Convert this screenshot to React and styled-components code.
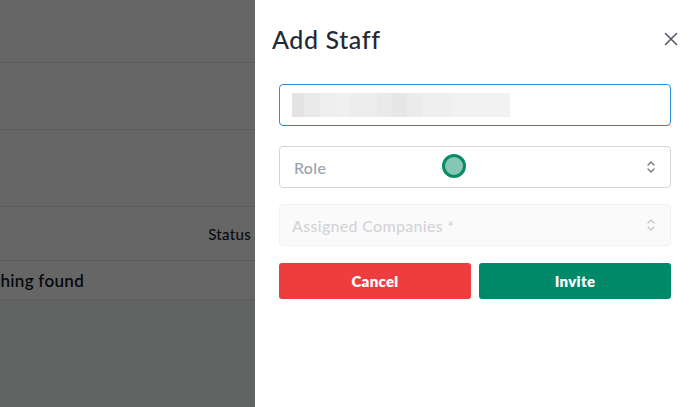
import React from "react"
import styled, { createGlobalStyle } from "styled-components"

const GlobalStyle = createGlobalStyle`
  html, body {
    margin: 0;
    padding: 0;
    width: 695px;
    height: 407px;
    overflow: hidden;
    font-family: "Lato", "Open Sans", sans-serif;
  }
`

const Page = styled.div`
  position: relative;
  width: 695px;
  height: 407px;
  background: #f3f4f6;
  overflow: hidden;
`

const Row = styled.div`
  height: ${props => props.h}px;
  box-sizing: border-box;
  background: #ffffff;
  border-bottom: 1px solid #e5e7eb;
  display: flex;
  align-items: center;
  color: #111827;
`

const HeadCell = styled.div`
  width: 251px;
  text-align: right;
  font-size: 15px;
  font-weight: 500;
  letter-spacing: 0.3px;
`

const EmptyText = styled.div`
  margin-left: -29px;
  font-size: 17px;
  font-weight: 600;
  letter-spacing: 0.3px;
`

const Overlay = styled.div`
  position: absolute;
  inset: 0;
  background: rgba(0, 0, 0, 0.6);
`

const Drawer = styled.aside`
  position: absolute;
  top: 0;
  right: 0;
  bottom: 0;
  width: 440px;
  background: #ffffff;
  box-sizing: border-box;
  padding: 0 24px;
`

const Header = styled.div`
  display: flex;
  align-items: center;
  justify-content: space-between;
  height: 78px;
  margin-left: -7px;
`

const Title = styled.h2`
  margin: 0;
  font-size: 25px;
  font-weight: 500;
  color: #1f2937;
  letter-spacing: 0.6px;
`

const Close = styled.button`
  border: none;
  background: none;
  padding: 0;
  margin-right: -7px;
  display: flex;
  color: #4b5563;
`

const Field = styled.div`
  position: relative;
  height: 42px;
  box-sizing: border-box;
  margin-top: ${props => props.mt}px;
  border: 1px solid ${props => props.borderColor};
  border-radius: 4px;
  background: ${props => props.bg || "#ffffff"};
  display: flex;
  align-items: center;
  justify-content: space-between;
  padding: 0 14px 0 ${props => props.pl || 14}px;
`

const Blurred = styled.div`
  width: 218px;
  height: 24px;
  background: linear-gradient(
    90deg,
    #e3e3e3 0 12px,
    #e9e9e9 12px 28px,
    #eeeeee 28px 43px,
    #f0f0f0 43px 58px,
    #ededed 58px 85px,
    #eaeaea 85px 100px,
    #e6e6e6 100px 115px,
    #ebebeb 115px 130px,
    #efefef 130px 160px,
    #f2f2f2 160px 218px
  );
`

const Placeholder = styled.span`
  font-size: 16px;
  font-weight: 500;
  letter-spacing: 0.3px;
  color: ${props => props.color};
`

const Cursor = styled.div`
  position: absolute;
  left: 162px;
  top: 7px;
  width: 18px;
  height: 18px;
  border-radius: 50%;
  background: #86c7b3;
  border: 3px solid #0b8a66;
`

const Buttons = styled.div`
  display: grid;
  grid-template-columns: 1fr 1fr;
  gap: 8px;
  margin-top: 17px;
`

const Button = styled.button`
  height: 36px;
  border: none;
  border-radius: 3px;
  background: ${props => props.bg};
  color: #ffffff;
  font-family: inherit;
  font-size: 15px;
  font-weight: 800;
  letter-spacing: 0.3px;
`

const Chevrons = ({ color }) => (
  <svg width="10" height="14" viewBox="0 0 10 14" fill="none" stroke={color} strokeWidth="1.2" strokeLinecap="round" strokeLinejoin="round">
    <path d="M2 5 L5 2 L8 5" />
    <path d="M2 9 L5 12 L8 9" />
  </svg>
)

export default function App() {
  return (
    <>
      <GlobalStyle />
      <Page>
        <Row h={63} />
        <Row h={67} />
        <Row h={77} />
        <Row h={54}><HeadCell>Status</HeadCell></Row>
        <Row h={39}><EmptyText>Nothing found</EmptyText></Row>
        <Overlay />
        <Drawer>
          <Header>
            <Title>Add Staff</Title>
            <Close>
              <svg width="14" height="14" viewBox="0 0 14 14" stroke="currentColor" strokeWidth="1.5" strokeLinecap="round">
                <path d="M1.5 1.5 L12.5 12.5 M12.5 1.5 L1.5 12.5" />
              </svg>
            </Close>
          </Header>
          <Field mt={6} borderColor="#2f87d8" pl={12}>
            <Blurred />
          </Field>
          <Field mt={20} borderColor="#d1d5db">
            <Placeholder color="#9ca3af">Role</Placeholder>
            <Chevrons color="#6b7280" />
            <Cursor />
          </Field>
          <Field mt={16} borderColor="#f1f1f3" bg="#fafafa" pl={12}>
            <Placeholder color="#d4d4d8">Assigned Companies *</Placeholder>
            <Chevrons color="#c4c4c8" />
          </Field>
          <Buttons>
            <Button bg="#ef3d3f">Cancel</Button>
            <Button bg="#008a69">Invite</Button>
          </Buttons>
        </Drawer>
      </Page>
    </>
  )
}
